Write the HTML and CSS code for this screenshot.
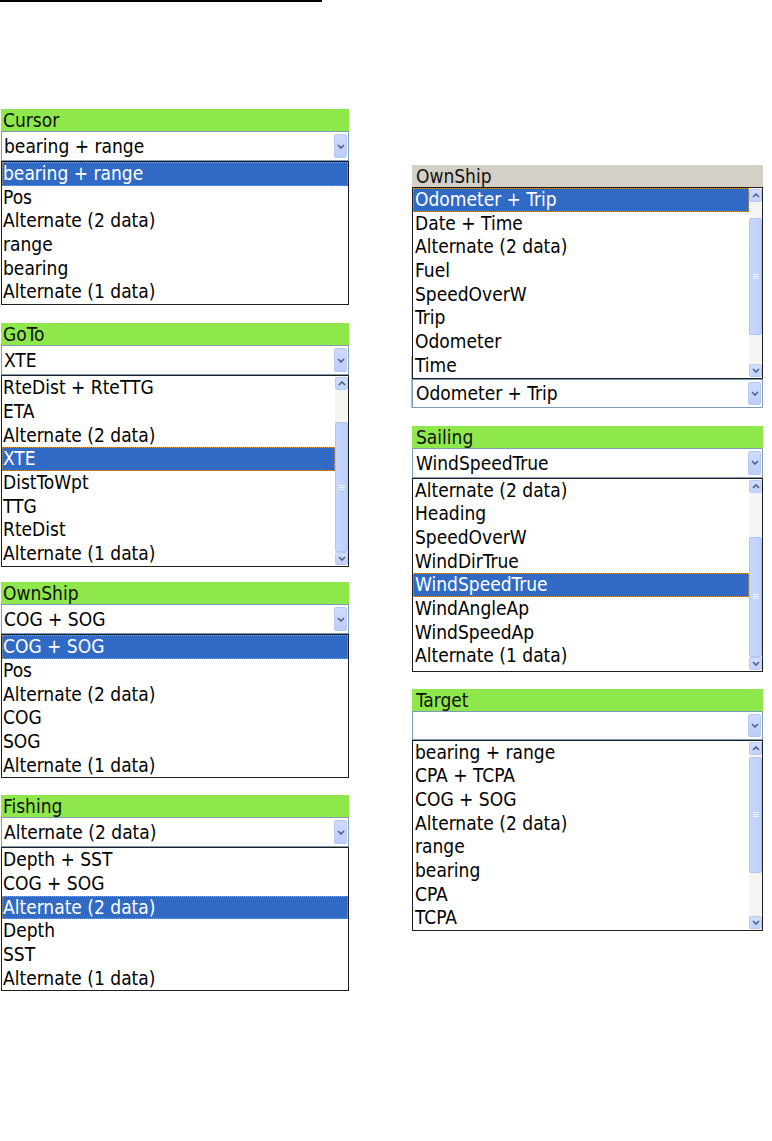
FILE: index.html
```html
<!DOCTYPE html>
<html>
<head>
<meta charset="utf-8">
<link rel="stylesheet" href="styles.css">
</head>
<body>
<div class="rule"></div>
<main class="sheet">
  <section class="col col-left">
    <div class="panel">
      <div class="head">Cursor</div>
      <div class="combo"><span class="val">bearing + range</span><span class="btn"><svg width="8" height="5" viewBox="0 0 8 5"><polyline points="1,1 4,4 7,1"/></svg></span></div>
      <div class="list">
        <ul class="items">
          <li class="sel">bearing + range</li>
          <li>Pos</li>
          <li>Alternate (2 data)</li>
          <li>range</li>
          <li>bearing</li>
          <li>Alternate (1 data)</li>
        </ul>
      </div>
    </div>

    <div class="panel panel-goto">
      <div class="head">GoTo</div>
      <div class="combo"><span class="val">XTE</span><span class="btn"><svg width="8" height="5" viewBox="0 0 8 5"><polyline points="1,1 4,4 7,1"/></svg></span></div>
      <div class="list">
        <ul class="items">
          <li>RteDist + RteTTG</li>
          <li>ETA</li>
          <li>Alternate (2 data)</li>
          <li class="sel">XTE</li>
          <li>DistToWpt</li>
          <li>TTG</li>
          <li>RteDist</li>
          <li>Alternate (1 data)</li>
        </ul>
        <div class="sbar">
          <span class="sbtn"><svg width="8" height="5" viewBox="0 0 8 5"><polyline points="1,4 4,1 7,4"/></svg></span>
          <div class="track"><span class="thumb" style="margin-top:32px;height:130px"><svg width="6" height="5" viewBox="0 0 6 5"><path d="M0 0.5H6M0 2.5H6M0 4.5H6"/></svg></span></div>
          <span class="sbtn"><svg width="8" height="5" viewBox="0 0 8 5"><polyline points="1,1 4,4 7,1"/></svg></span>
        </div>
      </div>
    </div>

    <div class="panel panel-ownship">
      <div class="head">OwnShip</div>
      <div class="combo"><span class="val">COG + SOG</span><span class="btn"><svg width="8" height="5" viewBox="0 0 8 5"><polyline points="1,1 4,4 7,1"/></svg></span></div>
      <div class="list">
        <ul class="items">
          <li class="sel">COG + SOG</li>
          <li>Pos</li>
          <li>Alternate (2 data)</li>
          <li>COG</li>
          <li>SOG</li>
          <li>Alternate (1 data)</li>
        </ul>
      </div>
    </div>

    <div class="panel panel-fishing">
      <div class="head">Fishing</div>
      <div class="combo"><span class="val">Alternate (2 data)</span><span class="btn"><svg width="8" height="5" viewBox="0 0 8 5"><polyline points="1,1 4,4 7,1"/></svg></span></div>
      <div class="list">
        <ul class="items">
          <li>Depth + SST</li>
          <li>COG + SOG</li>
          <li class="sel">Alternate (2 data)</li>
          <li>Depth</li>
          <li>SST</li>
          <li>Alternate (1 data)</li>
        </ul>
      </div>
    </div>
  </section>

  <section class="col col-right">
    <div class="panel panel-open-up">
      <div class="head head-gray">OwnShip</div>
      <div class="list">
        <ul class="items">
          <li class="sel">Odometer + Trip</li>
          <li>Date + Time</li>
          <li>Alternate (2 data)</li>
          <li>Fuel</li>
          <li>SpeedOverW</li>
          <li>Trip</li>
          <li>Odometer</li>
          <li>Time</li>
        </ul>
        <div class="sbar">
          <span class="sbtn"><svg width="8" height="5" viewBox="0 0 8 5"><polyline points="1,4 4,1 7,4"/></svg></span>
          <div class="track"><span class="thumb" style="margin-top:16px;height:117px"><svg width="6" height="5" viewBox="0 0 6 5"><path d="M0 0.5H6M0 2.5H6M0 4.5H6"/></svg></span></div>
          <span class="sbtn"><svg width="8" height="5" viewBox="0 0 8 5"><polyline points="1,1 4,4 7,1"/></svg></span>
        </div>
      </div>
      <div class="combo combo-short"><span class="val">Odometer + Trip</span><span class="btn"><svg width="8" height="5" viewBox="0 0 8 5"><polyline points="1,1 4,4 7,1"/></svg></span></div>
    </div>

    <div class="panel panel-sailing">
      <div class="head">Sailing</div>
      <div class="combo"><span class="val">WindSpeedTrue</span><span class="btn"><svg width="8" height="5" viewBox="0 0 8 5"><polyline points="1,1 4,4 7,1"/></svg></span></div>
      <div class="list">
        <ul class="items">
          <li>Alternate (2 data)</li>
          <li>Heading</li>
          <li>SpeedOverW</li>
          <li>WindDirTrue</li>
          <li class="sel">WindSpeedTrue</li>
          <li>WindAngleAp</li>
          <li>WindSpeedAp</li>
          <li>Alternate (1 data)</li>
        </ul>
        <div class="sbar">
          <span class="sbtn"><svg width="8" height="5" viewBox="0 0 8 5"><polyline points="1,4 4,1 7,4"/></svg></span>
          <div class="track"><span class="thumb" style="margin-top:44px;height:120px"><svg width="6" height="5" viewBox="0 0 6 5"><path d="M0 0.5H6M0 2.5H6M0 4.5H6"/></svg></span></div>
          <span class="sbtn"><svg width="8" height="5" viewBox="0 0 8 5"><polyline points="1,1 4,4 7,1"/></svg></span>
        </div>
      </div>
    </div>

    <div class="panel panel-target">
      <div class="head">Target</div>
      <div class="combo combo-short"><span class="val"></span><span class="btn"><svg width="8" height="5" viewBox="0 0 8 5"><polyline points="1,1 4,4 7,1"/></svg></span></div>
      <div class="list">
        <ul class="items">
          <li>bearing + range</li>
          <li>CPA + TCPA</li>
          <li>COG + SOG</li>
          <li>Alternate (2 data)</li>
          <li>range</li>
          <li>bearing</li>
          <li>CPA</li>
          <li>TCPA</li>
        </ul>
        <div class="sbar">
          <span class="sbtn"><svg width="8" height="5" viewBox="0 0 8 5"><polyline points="1,4 4,1 7,4"/></svg></span>
          <div class="track"><span class="thumb" style="margin-top:2px;height:116px"><svg width="6" height="5" viewBox="0 0 6 5"><path d="M0 0.5H6M0 2.5H6M0 4.5H6"/></svg></span></div>
          <span class="sbtn"><svg width="8" height="5" viewBox="0 0 8 5"><polyline points="1,1 4,4 7,1"/></svg></span>
        </div>
      </div>
    </div>
  </section>
</main>
</body>
</html>
```

FILE: styles.css
```css
body {
  margin: 0;
  background: #fff;
  color: #000;
  font-family: "DejaVu Sans Condensed", "DejaVu Sans", sans-serif;
  font-size: 19px;
}

.rule {
  width: 322px;
  height: 2px;
  background: #000;
}

.sheet {
  display: flex;
  align-items: flex-start;
}

.col {
  display: flex;
  flex-direction: column;
}

.col-left {
  width: 348px;
  margin-left: 1px;
  padding-top: 107px;
}

.col-right {
  width: 351px;
  margin-left: 63px;
  padding-top: 163px;
}

.panel {
  display: flex;
  flex-direction: column;
  position: relative;
}

.panel-goto {
  margin-top: 18px;
}

.panel-ownship {
  margin-top: 15px;
}

.panel-fishing {
  margin-top: 17px;
}

.panel-sailing {
  margin-top: 18px;
}

.panel-target {
  margin-top: 17px;
}

.head {
  height: 22px;
  line-height: 22px;
  background: #8ee84c;
  padding-left: 2px;
  color: #111;
}

.col-right .head {
  padding-left: 4px;
}

.head-gray {
  background: #d4d0c8;
}

.combo {
  height: 30px;
  box-sizing: border-box;
  border: 1px solid #7f9db9;
  background: #fff;
  display: flex;
  align-items: center;
  padding: 2px 1px 2px 2px;
}

.combo-short {
  height: 29px;
}

.col-right .combo {
  padding-left: 3px;
}

.val {
  flex: 1;
  white-space: nowrap;
}

.btn {
  width: 13px;
  align-self: stretch;
  box-sizing: border-box;
  background: linear-gradient(#cfdcfd, #bccdfa);
  border: 1px solid #b6c8f4;
  border-radius: 2px;
  display: flex;
  align-items: center;
  justify-content: center;
}

svg polyline {
  fill: none;
  stroke: #4d6185;
  stroke-width: 1.6;
}

.list {
  display: flex;
  border: 1px solid #1e1e1e;
  background: #fff;
}

.items {
  list-style: none;
  margin: 0;
  padding: 0;
  flex: 1;
  min-width: 0;
}

.items li {
  height: 23.7px;
  line-height: 23.7px;
  padding-left: 1px;
  white-space: nowrap;
  overflow: hidden;
}

.col-right .items li {
  padding-left: 2px;
}

.items li.sel {
  background: #316ac5;
  color: #fff;
  outline: 1px dotted #d99a3a;
  outline-offset: -1px;
}

.sbar {
  width: 13px;
  display: flex;
  flex-direction: column;
  background: #f6f5f1;
  padding: 1px 0;
}

.sbtn {
  height: 13px;
  box-sizing: border-box;
  background: linear-gradient(#d3defd, #c1d1fb);
  border: 1px solid #b9cbf5;
  border-radius: 2px;
  display: flex;
  align-items: center;
  justify-content: center;
}

.track {
  flex: 1;
  display: flex;
  flex-direction: column;
}

.thumb {
  box-sizing: border-box;
  background: linear-gradient(90deg, #c9d8fd, #bccefb);
  border: 1px solid #b1c5f4;
  border-radius: 2px;
  display: flex;
  align-items: center;
  justify-content: center;
}

.thumb path {
  stroke: #eef3ff;
  stroke-width: 1;
}

.panel-open-up::after {
  content: "";
  position: absolute;
  left: -1px;
  bottom: 0;
  width: 1px;
  height: 52px;
  background: #8ee84c;
}
```
